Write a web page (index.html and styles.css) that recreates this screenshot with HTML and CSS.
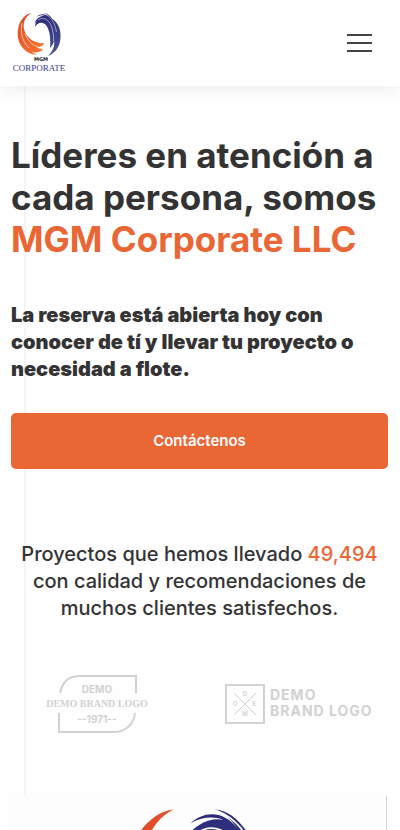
FILE: index.html
```html
<!DOCTYPE html>
<html lang="es">
<head>
  <meta charset="UTF-8">
  <meta name="viewport" content="width=device-width, initial-scale=1.0">
  <title>MGM Corporate LLC</title>
  <link rel="stylesheet" href="styles.css">
</head>
<body>

<header class="header">
  <a href="#" class="header__logo" aria-label="MGM Corporate">
    <svg width="54" height="62" viewBox="0 0 54 62">
      <defs>
        <linearGradient id="orange" x1="0" y1="0" x2="0.6" y2="1">
          <stop offset="0" stop-color="#d9482a"/>
          <stop offset="1" stop-color="#f4702c"/>
        </linearGradient>
        <linearGradient id="blue" x1="0" y1="0" x2="0" y2="1">
          <stop offset="0" stop-color="#2c2a78"/>
          <stop offset="1" stop-color="#4a5596"/>
        </linearGradient>
        <g id="swirl">
          <path fill="url(#orange)" d="M19.500 1C14 1.500 9 7 7 13C4 23 6 33 14 39C18 42 22 43 26 42.500C23 42 21 41 20 40C24 41 29 40 31 37C28 37 26 36 25 35C28 35 31 34 32 31C24 32 16 27 13 20C10 13 12 5 19.500 1Z"/>
          <path fill="none" stroke="#fff" stroke-width="0.6" d="M10 11C8 20 10 29 17 36M13 21C15 28 20 33 26 35"/>
          <path fill="url(#blue)" d="M24.500 5C28 1.500 34 1 38 6.500C36 3.500 34 1.800 31.500 1C35 1.200 38 3.500 40.500 7C46 11 48.500 17 48.500 23C49 33 44 41 36 44C41 39 43 34 42 28C42 31 40 34 38 36C39 25 37 14 32 11.500C28 9.500 25 12 23 15C23 12 24 10 25.500 8.500C24.500 9.500 23.500 10.500 22.500 12C23 9 24.500 7 27 5.500C29 4 32 3.500 34 4C31 2.800 27.500 3.200 24.500 5Z"/>
          <path fill="none" stroke="#fff" stroke-width="0.5" d="M32 1.300C39 4 43 11 44.500 20M26 8C31 4.500 36 7 39 13C41 18 42 24 41.500 29"/>
        </g>
      </defs>
      <use href="#swirl"/>
      <text class="logo-mgm" x="29" y="49" text-anchor="middle">MGM</text>
      <text class="logo-corporate" x="27" y="59" text-anchor="middle">CORPORATE</text>
    </svg>
  </a>
  <button class="header__menu" type="button" aria-label="Menú">
    <span></span>
    <span></span>
    <span></span>
  </button>
</header>

<main>
  <section class="hero">
    <h1 class="hero__title">Líderes en atención a cada persona, somos <span class="accent">MGM Corporate LLC</span></h1>
    <p class="hero__text">La reserva está abierta hoy con conocer de tí y llevar tu proyecto o necesidad a flote.</p>
    <a href="#" class="hero__button">Contáctenos</a>
    <p class="hero__stats">Proyectos que hemos llevado <span class="accent">49,494</span> con calidad y recomendaciones de muchos clientes satisfechos.</p>
    <div class="brands">
      <svg class="brands__logo" width="108" height="60" viewBox="0 0 108 60">
        <path fill="none" stroke="#d2d2d2" stroke-width="2" d="M15 18C17 8 23 1 35 1H91V18M14 38V57H71C82 56 89 48 90 38"/>
        <text class="brand-demo" x="52" y="18" text-anchor="middle">DEMO</text>
        <text class="brand-name" x="52" y="32" text-anchor="middle">DEMO BRAND LOGO</text>
        <text class="brand-year" x="52" y="48" text-anchor="middle">--1971--</text>
      </svg>
      <svg class="brands__logo" width="156" height="60" viewBox="0 0 156 60">
        <path fill="none" stroke="#d2d2d2" stroke-width="2" d="M2 10H40V48H2Z"/>
        <path fill="none" stroke="#d2d2d2" d="M10 18L32 40M32 18L10 40"/>
        <g class="brand-letter" text-anchor="middle">
          <text x="21" y="21">D</text>
          <text x="11" y="31">O</text>
          <text x="30" y="31">E</text>
          <text x="21" y="41">M</text>
        </g>
        <text class="brand-sans" x="46" y="25">DEMO</text>
        <text class="brand-sans" x="46" y="41">BRAND LOGO</text>
      </svg>
    </div>
  </section>

  <section class="about">
    <svg class="about__image" viewBox="0 0 54 46" role="img" aria-label="MGM Corporate">
      <use href="#swirl"/>
    </svg>
  </section>
</main>

</body>
</html>
```
FILE: styles.css
```css
* {
  box-sizing: border-box;
}
body {
  font-family: Inter, sans-serif;
  color: #333;
  background: #fefefe;
  margin: 0;
}

.header {
  position: relative;
  display: flex;
  align-items: center;
  justify-content: space-between;
  height: 86px;
  padding: 0 24px 0 12px;
  background: #fff;
  box-shadow: 0 4px 16px rgba(0, 0, 0, 0.06);
}
.header__logo {
  display: flex;
}
.header__menu {
  display: flex;
  flex-direction: column;
  gap: 6px;
  padding: 4px;
  border: none;
  background: none;
  cursor: pointer;
}
.header__menu span {
  width: 25px;
  height: 2px;
  background: #444;
}

.logo-mgm {
  font: 700 5px "DejaVu Sans", sans-serif;
  fill: #222;
}
.logo-corporate {
  font: 9px "Liberation Serif", serif;
  fill: #36398a;
}

.accent {
  color: #e96635;
}

.hero {
  padding: 48px 12px 61px 11px;
  background: linear-gradient(#f5f5f5, #f5f5f5) 24px 0 / 2px 100% no-repeat;
}
.hero__title {
  margin: 0;
  font-size: 35px;
  font-weight: 700;
  line-height: 42px;
}
.hero__text {
  margin: 42px 0 30px;
  font-size: 20px;
  font-weight: 900;
  line-height: 27px;
}
.hero__button {
  display: block;
  padding: 16px;
  border-radius: 5px;
  background: #e96635;
  color: #fff;
  font-size: 15px;
  font-weight: 600;
  line-height: 24px;
  text-align: center;
  text-decoration: none;
}
.hero__stats {
  margin: 72px 0 53px;
  font-size: 20px;
  font-weight: 500;
  line-height: 27px;
  text-align: center;
}

.brands {
  display: flex;
  justify-content: space-between;
  padding: 0 8px 0 34px;
}
.brands__logo {
  flex-shrink: 0;
}
.brands text {
  fill: #d2d2d2;
}
.brand-demo {
  font: 700 10px Inter, sans-serif;
}
.brand-name {
  font: 700 10px "Liberation Serif", serif;
}
.brand-year {
  font: 700 10px Inter, sans-serif;
}
.brand-letter {
  font: 600 6px Inter, sans-serif;
}
.brand-sans {
  font: 700 14px Inter, sans-serif;
  letter-spacing: 1px;
}

.about {
  margin: 0 13px;
  padding: 10px 0;
  border-right: 1px solid #d4d4d4;
  background: #fdfdfd;
}
.about__image {
  display: block;
  width: 50%;
  margin: 0 auto;
}
```
